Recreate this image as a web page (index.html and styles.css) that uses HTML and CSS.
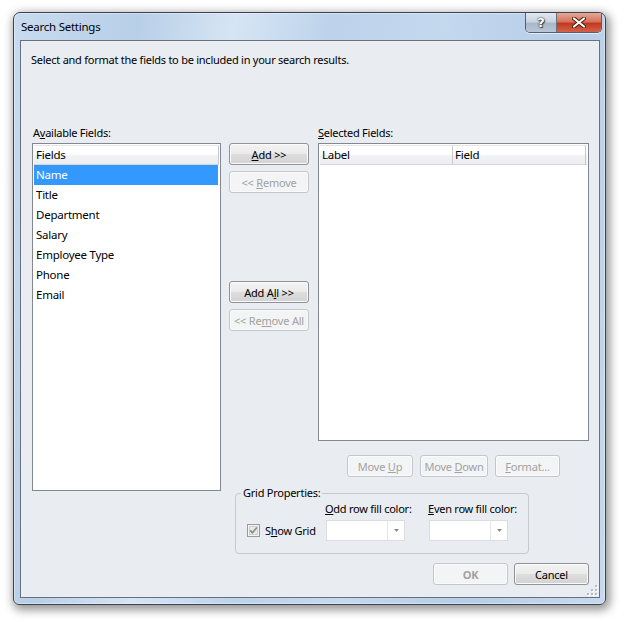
FILE: index.html
```html
<!DOCTYPE html>
<html>
<head>
<meta charset="utf-8">
<link rel="stylesheet" href="styles.css">
</head>
<body>
<div class="window">
  <div class="titlebar">
    <span class="title">Search Settings</span>
    <div class="caption-btns">
      <span class="cap help">?</span>
      <span class="cap close">
        <svg width="14" height="11" viewBox="0 0 14 11">
          <path d="M2 1.5 L12 9.5 M12 1.5 L2 9.5" stroke="#4a1a10" stroke-width="4" stroke-linecap="round" fill="none"/>
          <path d="M2 1.5 L12 9.5 M12 1.5 L2 9.5" stroke="#ffffff" stroke-width="2.2" stroke-linecap="round" fill="none"/>
        </svg>
      </span>
    </div>
  </div>
  <div class="client">
    <p class="intro">Select and format the fields to be included in your search results.</p>
    <div class="main">
      <div class="lbl lbl-avail">A<u>v</u>ailable Fields:</div>
      <div class="lbl lbl-sel"><u>S</u>elected Fields:</div>
      <div class="list list-avail">
        <div class="hdr"><span class="hcell hfull">Fields</span></div>
        <div class="row sel">Name</div>
        <div class="row">Title</div>
        <div class="row">Department</div>
        <div class="row">Salary</div>
        <div class="row">Employee Type</div>
        <div class="row">Phone</div>
        <div class="row">Email</div>
      </div>
      <div class="mid">
        <button class="btn"><u>A</u>dd &gt;&gt;</button>
        <button class="btn disabled btn-gap">&lt;&lt; <u>R</u>emove</button>
        <button class="btn btn-all">Add A<u>l</u>l &gt;&gt;</button>
        <button class="btn disabled btn-gap">&lt;&lt; Re<u>m</u>ove All</button>
      </div>
      <div class="list list-sel">
        <div class="hdr"><span class="hcell hlabel">Label</span><span class="hcell hfield">Field</span></div>
      </div>
      <div class="movebar">
        <button class="btn disabled w-up">Move <u>U</u>p</button>
        <button class="btn disabled w-down">Move <u>D</u>own</button>
        <button class="btn disabled w-fmt"><u>F</u>ormat...</button>
      </div>
      <div class="group">
        <span class="legend">Grid Properties:</span>
        <div class="showgrid">
          <svg class="chk" width="13" height="13" viewBox="0 0 13 13">
            <rect x="0.5" y="0.5" width="12" height="12" fill="#f4f4f4" stroke="#9a9a9a"/>
            <rect x="2.5" y="2.5" width="8" height="8" fill="#e8e8e8" stroke="#d0d0d0"/>
            <path d="M3.2 6.4 L5.4 8.8 L9.8 3.6" stroke="#8a8a8a" stroke-width="1.6" fill="none"/>
          </svg>
          <span>S<u>h</u>ow Grid</span>
        </div>
        <div class="colorcol odd">
          <span class="clbl"><u>O</u>dd row fill color:</span>
          <div class="combo"><span class="combo-drop"><svg width="5" height="3" viewBox="0 0 5 3"><path d="M0 0 H5 L2.5 3 Z" fill="#8c8c8c"/></svg></span></div>
        </div>
        <div class="colorcol even">
          <span class="clbl"><u>E</u>ven row fill color:</span>
          <div class="combo"><span class="combo-drop"><svg width="5" height="3" viewBox="0 0 5 3"><path d="M0 0 H5 L2.5 3 Z" fill="#8c8c8c"/></svg></span></div>
        </div>
      </div>
    </div>
    <div class="footer">
      <button class="btn disabled ok">OK</button>
      <button class="btn cancel">Cancel</button>
    </div>
    <svg class="grip" width="11" height="11" viewBox="0 0 11 11">
      <g fill="#ffffff">
        <rect x="9" y="1" width="2" height="2"/><rect x="9" y="5" width="2" height="2"/><rect x="9" y="9" width="2" height="2"/>
        <rect x="5" y="5" width="2" height="2"/><rect x="5" y="9" width="2" height="2"/><rect x="1" y="9" width="2" height="2"/>
      </g>
      <g fill="#b4bcc6">
        <rect x="8" y="0" width="2" height="2"/><rect x="8" y="4" width="2" height="2"/><rect x="8" y="8" width="2" height="2"/>
        <rect x="4" y="4" width="2" height="2"/><rect x="4" y="8" width="2" height="2"/><rect x="0" y="8" width="2" height="2"/>
      </g>
    </svg>
  </div>
</div>
</body>
</html>
```

FILE: styles.css
```css
* { box-sizing: border-box; }
html, body {
  margin: 0;
  padding: 0;
  background: #ffffff;
  width: 625px;
  height: 624px;
  overflow: hidden;
}
body {
  font-family: "Noto Sans", "Open Sans", sans-serif;
  font-size: 11px;
  letter-spacing: -0.25px;
  color: #000;
  padding: 12px 0 0 13px;
  white-space: nowrap;
}
u { text-decoration: underline; text-underline-offset: 1px; }

.window {
  width: 593px;
  height: 593px;
  border: 1px solid #3a4452;
  border-radius: 7px 7px 6px 6px;
  padding: 0 5px 6px 6px;
  display: flex;
  flex-direction: column;
  background: linear-gradient(100deg, #c8dbef 0%, #b8cfe8 18%, #d6e5f4 32%, #bdd3eb 46%, #c4d8ee 62%, #b7cee8 80%, #c6d9ee 100%);
  box-shadow: 0 0 0 1px rgba(255,255,255,0.35) inset, 2px 3px 10px 2px rgba(0,0,0,0.42);
}

.titlebar {
  height: 27px;
  display: flex;
  justify-content: space-between;
  align-items: flex-start;
}
.title {
  align-self: center;
  padding-left: 1px;
  font-size: 11.5px;
  color: #000;
}
.caption-btns {
  display: flex;
  margin-right: -2px;
  border: 1px solid #55606e;
  border-top: none;
  border-radius: 0 0 5px 5px;
  overflow: hidden;
  box-shadow: 0 1px 0 rgba(255,255,255,0.6);
}
.cap {
  height: 19px;
  display: flex;
  align-items: center;
  justify-content: center;
}
.help {
  width: 31px;
  background: linear-gradient(#e1e8f0 0%, #c9d4e0 45%, #a9b8c9 55%, #b9c7d6 100%);
  border-right: 1px solid #6a6f78;
  color: #fff;
  font-family: "DejaVu Sans", sans-serif;
  font-size: 13px;
  font-weight: bold;
  letter-spacing: 0;
  text-shadow: 0 0 1px #333, 0 0 2px #333, 1px 1px 1px #444;
}
.close {
  width: 44px;
  background: linear-gradient(#e8a899 0%, #d5735e 45%, #c2391f 55%, #d3634a 100%);
}

.client {
  flex: 1;
  position: relative;
  border: 1px solid #66717f;
  background: #e9ecf0;
  padding: 11px 10px 0 10px;
}
.intro {
  margin: 0 0 59px 0;
  line-height: 15px;
}

.main {
  margin-left: 1px;
  display: grid;
  grid-template-columns: 189px 8px 80px 9px 271px;
  grid-template-rows: 17px 298px 50px 62px;
}
.lbl { line-height: 14px; }
.lbl-avail { grid-column: 1; grid-row: 1; padding-left: 1px; }
.lbl-sel { grid-column: 5; grid-row: 1; }

.list {
  background: #fff;
  border: 1px solid #828790;
  padding: 1px;
}
.list-avail { grid-column: 1; grid-row: 2 / 4; }
.list-sel { grid-column: 5; grid-row: 2; }

.hdr {
  display: flex;
  height: 20px;
  background: linear-gradient(#ffffff 0%, #ffffff 45%, #f1f2f4 55%, #eceef1 100%);
  border-bottom: 1px solid #d5d5d5;
  border-top: 1px solid #e6e6e6;
}
.hcell {
  line-height: 17px;
  padding-left: 2px;
  border-right: 1px solid #c5c9cf;
  font-size: 11.5px;
}
.hfull { width: 185px; }
.hlabel { width: 133px; }
.hfield { width: 133px; }

.row {
  height: 20px;
  line-height: 19px;
  padding-left: 2px;
  font-size: 11.5px;
}
.row.sel {
  background: #3399ff;
  color: #fff;
  margin-right: 1px;
}

.mid {
  grid-column: 3;
  grid-row: 2 / 4;
  display: flex;
  flex-direction: column;
}
.btn {
  font-family: inherit;
  font-size: 11px;
  letter-spacing: -0.2px;
  color: #000;
  height: 22px;
  padding: 0;
  line-height: 19px;
  white-space: nowrap;
  border: 1px solid #8f9296;
  border-radius: 3px;
  background: linear-gradient(#f3f3f3 0%, #ebebeb 48%, #dddddd 52%, #d3d3d3 100%);
  box-shadow: inset 0 0 0 1px #fafafa;
}
.btn.disabled {
  color: #a2a2a2;
  border-color: #c3c6ca;
  background: #f3f4f5;
  box-shadow: inset 0 0 0 1px #fbfbfb;
}
.mid .btn { width: 80px; }
.btn-gap { margin-top: 6px; }
.btn-all { margin-top: 88px; }

.movebar {
  grid-column: 5;
  grid-row: 3;
  display: flex;
  justify-content: center;
  align-items: center;
  gap: 7px;
}
.w-up { width: 66px; }
.w-down { width: 68px; }
.w-fmt { width: 65px; }

.group {
  grid-column: 3 / 6;
  grid-row: 4;
  margin: 2px 0 0 6px;
  width: 294px;
  height: 61px;
  border: 1px solid #c4cacf;
  border-radius: 4px;
  position: relative;
  display: flex;
  align-items: flex-end;
  padding: 0 0 12px 11px;
}
.legend {
  position: absolute;
  left: 5px;
  top: -9px;
  padding: 0 2px;
  background: #e9ecf0;
  line-height: 15px;
}
.showgrid {
  width: 78px;
  height: 21px;
  display: flex;
  align-items: center;
  gap: 5px;
}
.chk { flex: none; }
.colorcol {
  display: flex;
  flex-direction: column;
}
.colorcol.odd { width: 103px; }
.clbl { line-height: 15px; margin-bottom: 4px; }
.combo {
  margin-left: 1px;
  width: 79px;
  height: 21px;
  background: #fff;
  border: 1px solid #dadcdf;
  display: flex;
  justify-content: flex-end;
}
.combo-drop {
  width: 17px;
  border-left: 1px solid #e4e6e8;
  display: flex;
  align-items: center;
  justify-content: center;
}
.combo-drop svg { display: block; }

.footer {
  margin-top: 10px;
  display: flex;
  justify-content: flex-end;
  gap: 6px;
}
.footer .btn { width: 75px; }
.btn.ok { font-weight: bold; }

.grip {
  position: absolute;
  right: 1px;
  bottom: 1px;
}
```
